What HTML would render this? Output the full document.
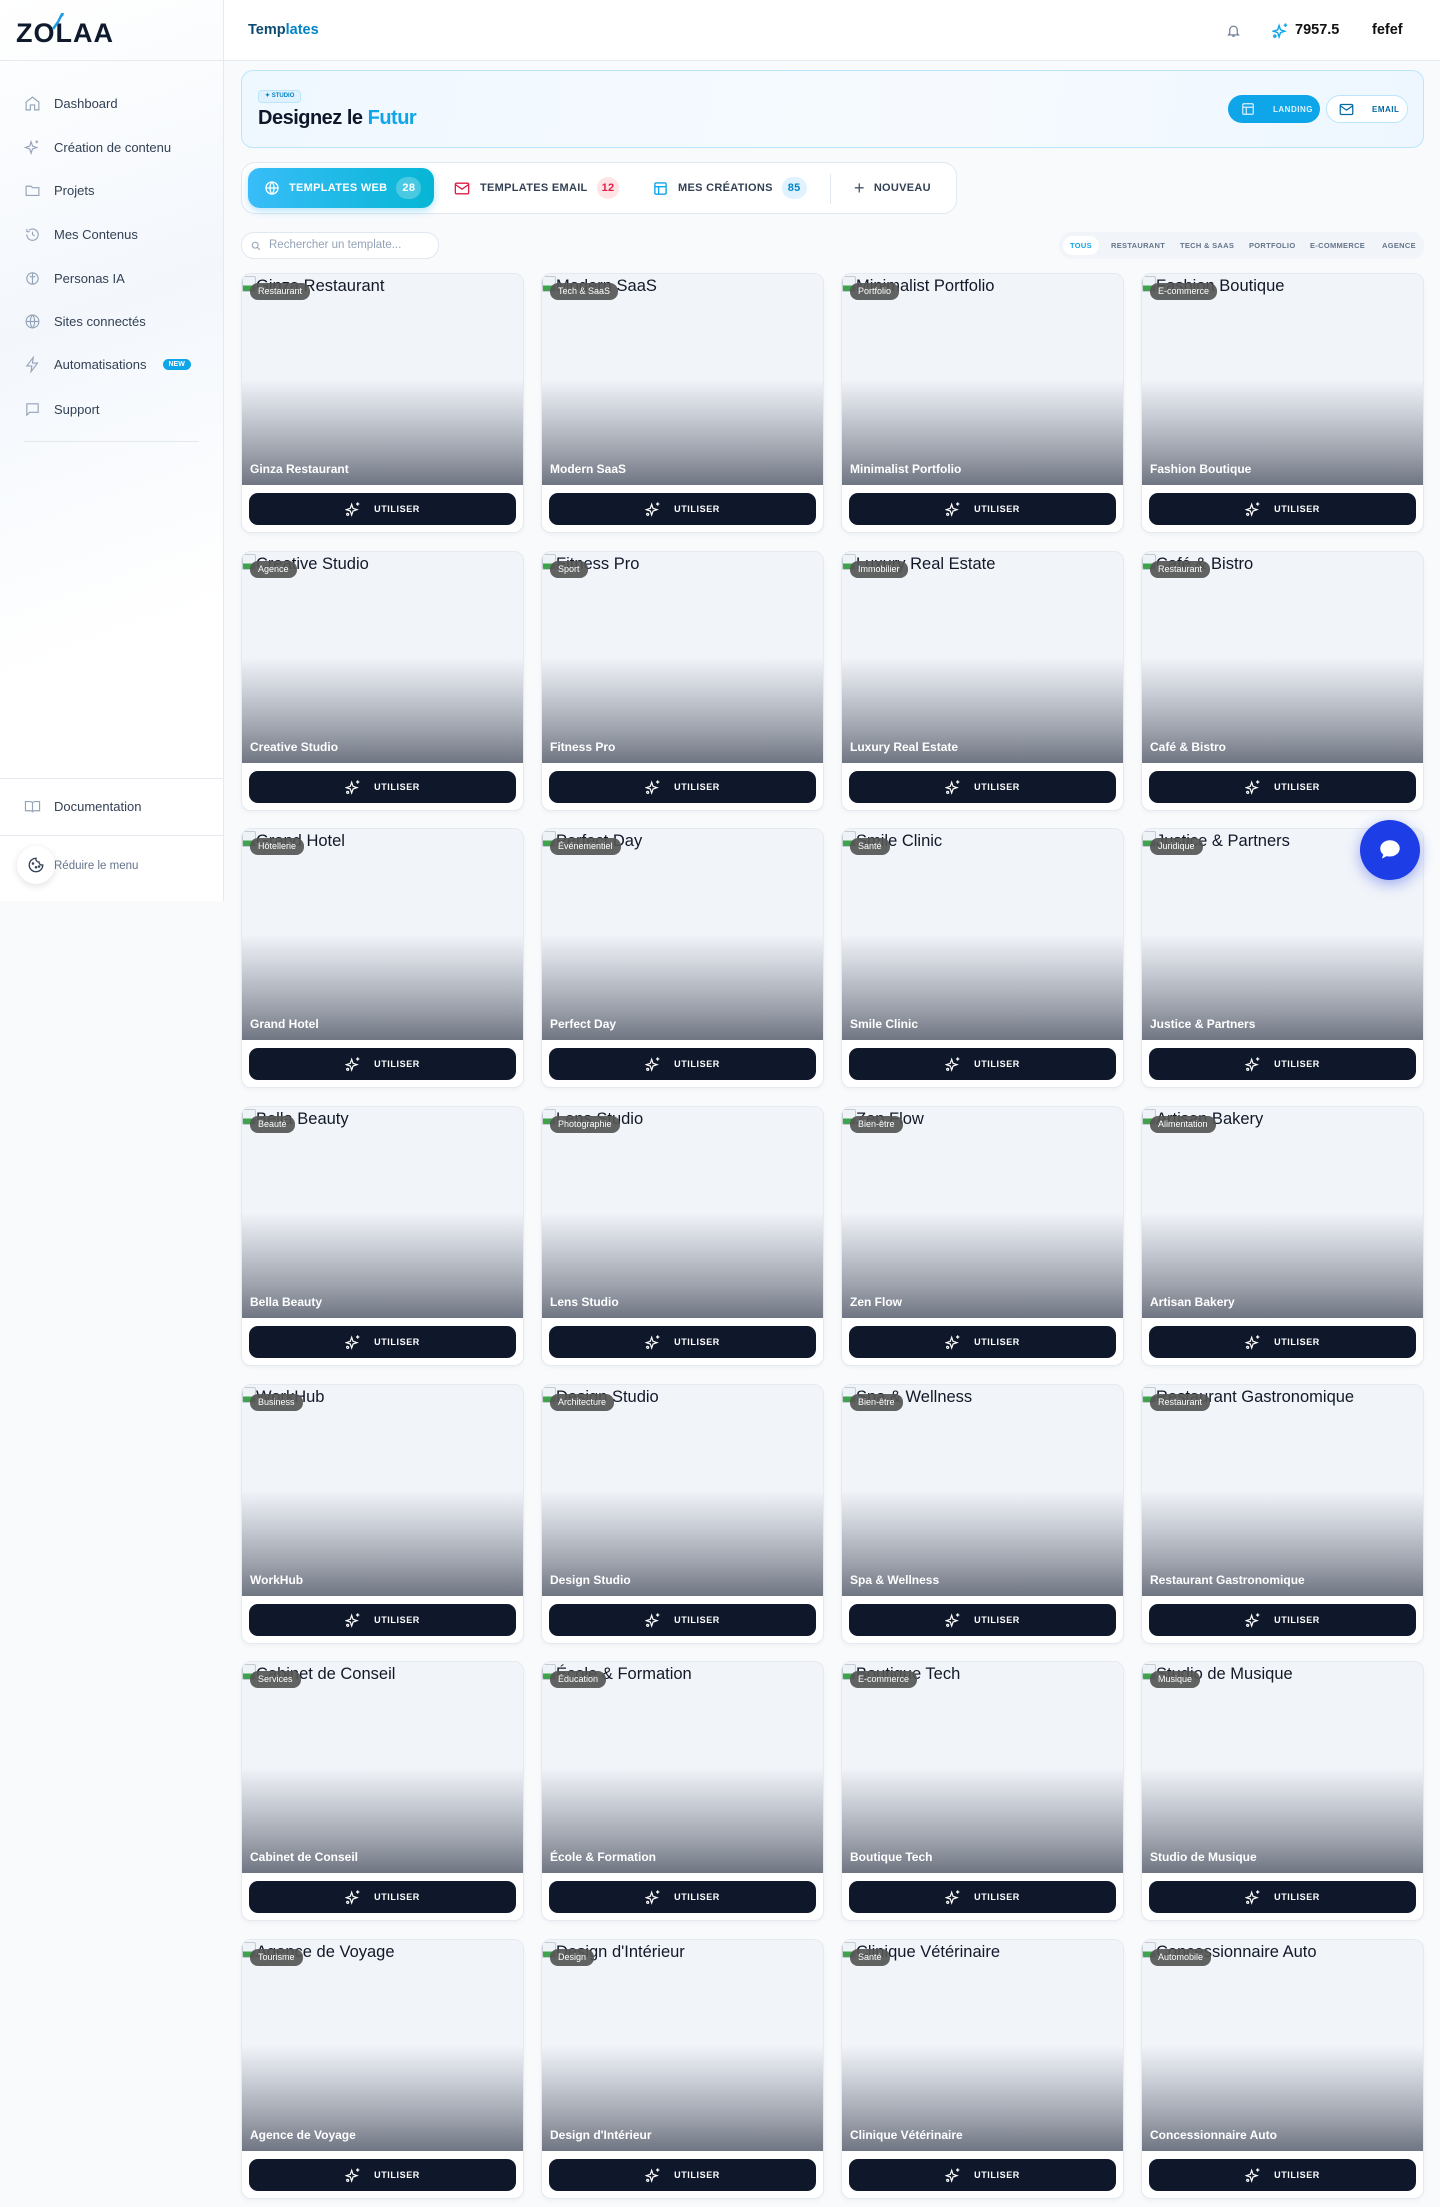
<!DOCTYPE html>
<html><head><meta charset="utf-8"><style>
*{box-sizing:border-box;margin:0;padding:0}
body{width:1440px;height:2207px;background:#f8fafc;font-family:"Liberation Sans",sans-serif;position:relative;overflow:hidden;color:#0f172a}
.side{position:absolute;left:0;top:0;width:224px;height:901px;background:linear-gradient(160deg,#fff 0%,#f3f7fc 35%,#fff 70%);border-right:1px solid #e5e9f0}
.logo{position:absolute;left:16px;top:18px;font-weight:900;font-size:27px;letter-spacing:1px;color:#0f1b2d}
.hb{position:absolute;left:0;top:60px;width:224px;border-top:1px solid #e5e9f0}
.nav{position:absolute;left:24px;font-size:13px;color:#334155;display:flex;align-items:center;gap:13px}
.nav svg{width:17px;height:17px;stroke:#94a3b8;fill:none;stroke-width:1.6}
.new{background:#0ea5e9;color:#fff;font-size:7px;font-weight:bold;border-radius:8px;padding:2px 6px;margin-left:3px}
.header{position:absolute;left:224px;top:0;right:0;height:61px;background:#fff;border-bottom:1px solid #e5e9f0}
.hero{position:absolute;left:241px;top:70px;width:1183px;height:78px;border:1px solid #bae6fd;border-radius:12px;background:linear-gradient(100deg,#f0f8ff,#f6faff 60%,#eef7ff)}
.btn{position:absolute;height:28px;border-radius:14px;display:flex;align-items:center;font-size:8px;font-weight:bold;letter-spacing:.5px}
.tabs{position:absolute;left:241px;top:162px;width:716px;height:52px;background:#fff;border:1px solid #e2e8f0;border-radius:14px}
.tab{position:absolute;top:0;height:50px;display:flex;align-items:center;font-size:11px;font-weight:bold;color:#334155;letter-spacing:.3px}
.grid{position:absolute;left:241px;top:273px;display:grid;grid-template-columns:repeat(4,283px);column-gap:17px;row-gap:17.7px;grid-auto-rows:260px}
.card{background:#fff;border:1px solid #e5e9f0;border-radius:10px;overflow:hidden;position:relative;box-shadow:0 2px 4px rgba(15,23,42,.04)}
.img{height:211px;background:linear-gradient(180deg,#f1f4f9 0%,#f1f4f9 50%,#c7cbd3 68%,#9ca1ab 85%,#6f7582 100%);position:relative}
.alt{position:absolute;left:14px;top:3px;font-size:16.5px;color:#111827;white-space:nowrap}
.bi{position:absolute;left:0;top:2px;width:14px;height:16px;border:1px solid #c5cbd4;background:linear-gradient(180deg,#eef3f8 60%,#3fa34d 60%);border-radius:2px}
.badge{position:absolute;z-index:2;left:8px;top:9px;background:rgba(85,85,85,.92);color:#fff;font-size:9px;border-radius:8px;padding:3px 8px 4px;white-space:nowrap}
.tt{position:absolute;left:8px;bottom:9px;color:#fff;font-weight:bold;font-size:12px}
.use{position:absolute;left:7px;right:7px;top:219px;height:32px;background:#0f172a;border-radius:9px;display:flex;align-items:center;justify-content:center;gap:13px;color:#fff;font-size:9px;font-weight:bold;letter-spacing:.6px}
</style></head><body>

<div class="side">
 <div class="logo">Z<span style="color:#0f1b2d">O</span>LAA</div>
 <svg style="position:absolute;left:50px;top:12px" width="16" height="20" viewBox="0 0 16 20"><path d="M12 2 L8 10 L3 17" stroke="#1e9be0" stroke-width="2.5" fill="none"/><path d="M11 1 L14 1 L13 5Z" fill="#1e9be0"/></svg>
 <div class="hb"></div>
 <div class="nav" style="top:95px"><svg viewBox="0 0 24 24"><path d="M3 10l9-7 9 7v11h-6v-7H9v7H3z"/></svg>Dashboard</div>
 <div class="nav" style="top:139px"><svg viewBox="0 0 24 24"><path d="M10 4l2 6 6 2-6 2-2 6-2-6-6-2 6-2zM18 2v4M16 4h4"/></svg>Création de contenu</div>
 <div class="nav" style="top:182px"><svg viewBox="0 0 24 24"><path d="M3 6h7l2 2h9v11H3z"/></svg>Projets</div>
 <div class="nav" style="top:226px"><svg viewBox="0 0 24 24"><path d="M4 12a8 8 0 1 0 3-6M4 4v4h4M12 8v4l3 2"/></svg>Mes Contenus</div>
 <div class="nav" style="top:270px"><svg viewBox="0 0 24 24"><circle cx="12" cy="12" r="8"/><path d="M12 4v16M8 9c2 1 6 1 8 0"/></svg>Personas IA</div>
 <div class="nav" style="top:313px"><svg viewBox="0 0 24 24"><circle cx="12" cy="12" r="9"/><path d="M3 12h18M12 3c4 4 4 14 0 18M12 3c-4 4-4 14 0 18"/></svg>Sites connectés</div>
 <div class="nav" style="top:356px"><svg viewBox="0 0 24 24"><path d="M13 2L4 14h7l-1 8 9-12h-7z"/></svg>Automatisations<span class="new">NEW</span></div>
 <div class="nav" style="top:401px"><svg viewBox="0 0 24 24"><path d="M4 4h16v12H8l-4 4z"/></svg>Support</div>
 <div style="position:absolute;left:24px;top:441px;width:175px;border-top:1px solid #e2e8f0"></div>
 <div style="position:absolute;left:0;top:778px;width:224px;border-top:1px solid #e5e9f0"></div>
 <div class="nav" style="top:798px"><svg viewBox="0 0 24 24"><path d="M2 5h7a3 3 0 0 1 3 3v12a3 3 0 0 0-3-2H2zM22 5h-7a3 3 0 0 0-3 3v12a3 3 0 0 1 3-2h7z"/></svg>Documentation</div>
 <div style="position:absolute;left:0;top:835px;width:224px;border-top:1px solid #e5e9f0"></div>
 <div style="position:absolute;left:17px;top:846px;width:38px;height:38px;border-radius:50%;background:#fff;box-shadow:0 2px 8px rgba(0,0,0,.12);display:flex;align-items:center;justify-content:center"><svg width="18" height="18" viewBox="0 0 24 24" fill="none" stroke="#334155" stroke-width="1.8"><path d="M12 3a9 9 0 1 0 9 9 4 4 0 0 1-5-4 4 4 0 0 1-4-5z"/><circle cx="8" cy="10" r=".8"/><circle cx="12" cy="15" r=".8"/><circle cx="16" cy="14" r=".8"/></svg></div>
 <div style="position:absolute;left:54px;top:860px;font-size:11.5px;color:#64748b">Réduire le menu</div>
</div>

<div class="header">
 <div style="position:absolute;left:24px;top:22px;font-size:14.5px;font-weight:bold;color:#0c4a6e">Temp<span style="color:#0284c7">lates</span></div>
 <svg style="position:absolute;left:1002px;top:22px" width="15" height="17" viewBox="0 0 24 24" fill="none" stroke="#64748b" stroke-width="1.8"><path d="M6 17V11a6 6 0 0 1 12 0v6l2 2H4zM10 21h4"/></svg>
 <svg style="position:absolute;left:1048px;top:22px" width="17" height="17" viewBox="0 0 24 24" fill="none" stroke="#0ea5e9" stroke-width="2"><path d="M10 5l2 6 6 2-6 2-2 6-2-6-6-2 6-2zM19 2v5M16.5 4.5h5"/><circle cx="4" cy="20" r="1.5"/></svg>
 <div style="position:absolute;left:1071px;top:22px;font-size:14.5px;font-weight:bold;color:#111">7957.5</div>
 <div style="position:absolute;left:1148px;top:22px;font-size:14.5px;font-weight:bold;color:#111">fefef</div>
</div>

<div class="hero">
 <div style="position:absolute;left:16px;top:19px;height:13px;padding:0 6px;border:1px solid #bae6fd;background:#e0f2fe;border-radius:4px;font-size:6px;font-weight:bold;color:#0284c7;line-height:11px">✦ STUDIO</div>
 <div style="position:absolute;left:16px;top:36px;font-size:20px;font-weight:bold;letter-spacing:-.5px;color:#0f172a">Designez le <span style="color:#0ea5e9">Futur</span></div>
 <div class="btn" style="left:986px;top:24px;width:92px;background:#0ea5e9;color:#e0f2fe"><svg style="margin:0 18px 0 13px" width="14" height="14" viewBox="0 0 24 24" fill="none" stroke="#e0f2fe" stroke-width="2"><rect x="3" y="3" width="18" height="18" rx="2"/><path d="M3 9h18M9 9v12"/></svg>LANDING</div>
 <div class="btn" style="left:1084px;top:24px;width:82px;background:#fff;border:1px solid #bae6fd;color:#0369a1"><svg style="margin:0 18px 0 12px" width="15" height="13" viewBox="0 0 24 20" fill="none" stroke="#0369a1" stroke-width="2"><rect x="2" y="2" width="20" height="16" rx="2"/><path d="M2 4l10 7 10-7"/></svg>EMAIL</div>
</div>

<div class="tabs">
 <div style="position:absolute;left:6px;top:5px;width:186px;height:40px;border-radius:12px;background:linear-gradient(90deg,#38bdf8,#06b6d4);box-shadow:0 3px 8px rgba(14,165,233,.3);display:flex;align-items:center;color:#fff;font-size:11px;font-weight:bold;letter-spacing:.3px"><svg style="margin:0 9px 0 16px" width="16" height="16" viewBox="0 0 24 24" fill="none" stroke="#fff" stroke-width="2"><circle cx="12" cy="12" r="9"/><path d="M3 12h18M12 3c4 4 4 14 0 18M12 3c-4 4-4 14 0 18"/></svg>TEMPLATES WEB<span style="margin-left:9px;background:rgba(255,255,255,.25);border-radius:11px;padding:5px 6px">28</span></div>
 <div class="tab" style="left:212px"><svg style="margin-right:10px" width="16" height="15" viewBox="0 0 24 22" fill="none" stroke="#e11d48" stroke-width="2"><rect x="2" y="3" width="20" height="16" rx="2"/><path d="M2 5l10 7 10-7"/></svg>TEMPLATES EMAIL<span style="margin-left:9px;background:#ffe4e6;color:#e11d48;border-radius:11px;padding:5px 5px">12</span></div>
 <div class="tab" style="left:411px"><svg style="margin-right:10px" width="15" height="15" viewBox="0 0 24 24" fill="none" stroke="#0ea5e9" stroke-width="2.2"><rect x="3" y="3" width="18" height="18" rx="2"/><path d="M3 9h18M9 9v12"/></svg>MES CRÉATIONS<span style="margin-left:9px;background:#e0f2fe;color:#0284c7;border-radius:11px;padding:5px 6px">85</span></div>
 <div style="position:absolute;left:588px;top:11px;height:30px;border-left:1px solid #e2e8f0"></div>
 <div class="tab" style="left:612px"><span style="font-size:18px;font-weight:normal;margin-right:9px;color:#475569">+</span>NOUVEAU</div>
</div>

<div style="position:absolute;left:241px;top:232px;width:198px;height:27px;border:1px solid #e2e8f0;border-radius:13px;background:#fff;font-size:11.5px;color:#94a3b8;line-height:25px;padding-left:27px">Rechercher un template...
 <svg style="position:absolute;left:9px;top:8px" width="10" height="10" viewBox="0 0 24 24" fill="none" stroke="#94a3b8" stroke-width="2.5"><circle cx="10" cy="10" r="7"/><path d="M15 15l6 6"/></svg></div>

<div style="position:absolute;left:1059px;top:232px;width:365px;height:27px;background:#f1f5f9;border-radius:13px;font-size:7.5px;font-weight:bold;color:#64748b;letter-spacing:.3px">
 <div style="position:absolute;left:4px;top:4px;width:36px;height:19px;background:#fff;border-radius:10px;color:#0ea5e9;text-align:center;line-height:19px">TOUS</div>
 <span style="position:absolute;left:52px;top:9px">RESTAURANT</span>
 <span style="position:absolute;left:121px;top:9px">TECH &amp; SAAS</span>
 <span style="position:absolute;left:190px;top:9px">PORTFOLIO</span>
 <span style="position:absolute;left:251px;top:9px">E-COMMERCE</span>
 <span style="position:absolute;left:323px;top:9px">AGENCE</span>
</div>

<div class="grid" id="g"></div>

<div style="position:absolute;left:1360px;top:820px;width:60px;height:60px;border-radius:50%;background:#1d3de6;box-shadow:0 4px 14px rgba(29,61,230,.4)"><svg style="position:absolute;left:17px;top:17px" width="26" height="26" viewBox="0 0 24 24"><path d="M12 3c5 0 9 3.4 9 7.5S17 18 12 18c-1 0-2-.1-3-.4L4.5 20l1.3-3.8C4 14.8 3 12.8 3 10.5 3 6.4 7 3 12 3z" fill="#fff"/></svg></div>

<script>
var d=[["Ginza Restaurant","Restaurant"],["Modern SaaS","Tech & SaaS"],["Minimalist Portfolio","Portfolio"],["Fashion Boutique","E-commerce"],
["Creative Studio","Agence"],["Fitness Pro","Sport"],["Luxury Real Estate","Immobilier"],["Café & Bistro","Restaurant"],
["Grand Hotel","Hôtellerie"],["Perfect Day","Événementiel"],["Smile Clinic","Santé"],["Justice & Partners","Juridique"],
["Bella Beauty","Beauté"],["Lens Studio","Photographie"],["Zen Flow","Bien-être"],["Artisan Bakery","Alimentation"],
["WorkHub","Business"],["Design Studio","Architecture"],["Spa & Wellness","Bien-être"],["Restaurant Gastronomique","Restaurant"],
["Cabinet de Conseil","Services"],["École & Formation","Éducation"],["Boutique Tech","E-commerce"],["Studio de Musique","Musique"],
["Agence de Voyage","Tourisme"],["Design d'Intérieur","Design"],["Clinique Vétérinaire","Santé"],["Concessionnaire Auto","Automobile"]];
var s='<svg width="16" height="16" viewBox="0 0 24 24" fill="none" stroke="#fff" stroke-width="1.8"><path d="M10 5l2 6 6 2-6 2-2 6-2-6-6-2 6-2zM19 2v5M16.5 4.5h5"/><circle cx="4" cy="20" r="1.5"/></svg>';
var h='';d.forEach(function(x){h+='<div class="card"><div class="img"><span class="bi"></span><span class="alt">'+x[0]+'</span><span class="badge">'+x[1]+'</span><span class="tt">'+x[0]+'</span></div><div class="use">'+s+'UTILISER</div></div>'});
document.getElementById('g').innerHTML=h;
</script>
</body></html>
